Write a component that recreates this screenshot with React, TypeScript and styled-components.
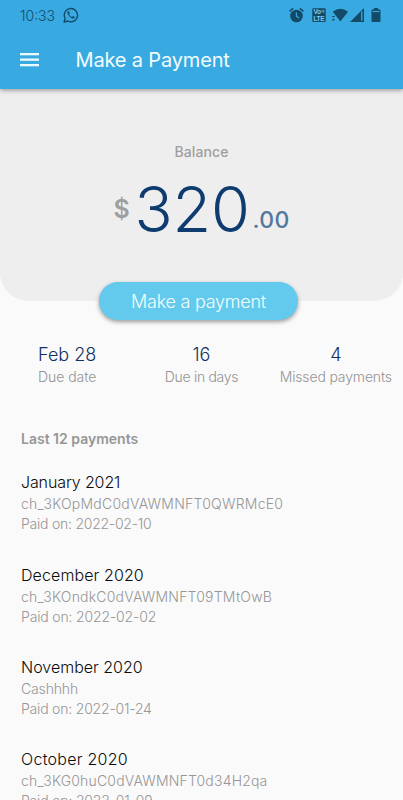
import React from 'react';
import styled, { createGlobalStyle } from 'styled-components';

const GlobalStyle = createGlobalStyle`
  * { box-sizing: border-box; }
  body {
    margin: 0;
    background: #fafafa;
    font-family: Inter, "Liberation Sans", sans-serif;
    font-weight: 300;
  }
`;

const Screen = styled.div`
  width: 100%;
  height: 800px;
  overflow: hidden;
  background: #fafafa;
`;

const Header = styled.header`
  position: relative;
  height: 89px;
  background: #39aae1;
  box-shadow: 0 1px 5px rgba(0, 0, 0, 0.42);
`;

const StatusBar = styled.div`
  display: flex;
  align-items: center;
  height: 31px;
  padding: 0 22px 0 20px;
  color: #124a68;
  font-size: 14px;
`;

const Clock = styled.span`
  width: 43px;
  line-height: 30px;
`;

const StatusIcons = styled.div`
  display: flex;
  align-items: center;
  margin-left: auto;
`;

const Glyph = styled.svg<{ $w: number; $gap?: number }>`
  display: block;
  flex: none;
  width: ${({ $w }) => $w}px;
  height: 16px;
  margin-top: -1px;
  margin-left: ${({ $gap = 0 }) => $gap}px;
`;

const AppBar = styled.div`
  display: flex;
  align-items: center;
  height: 58px;
  padding-left: 20px;
`;

const MenuButton = styled.button`
  display: flex;
  margin-right: 36.5px;
  padding: 0;
  border: 0;
  background: none;
`;

const Title = styled.h1`
  margin: 0;
  color: #f2fcff;
  font-size: 20px;
  font-weight: 400;
  line-height: 24px;
  letter-spacing: -0.16px;
`;

const BalancePanel = styled.section`
  display: flex;
  flex-direction: column;
  align-items: center;
  height: 212px;
  padding-top: 53px;
  border-radius: 0 0 28px 28px;
  background: #eee;
`;

const BalanceLabel = styled.div`
  color: #9e9e9e;
  font-size: 14px;
  font-weight: 500;
  line-height: 20px;
  letter-spacing: 0.08px;
`;

const Amount = styled.div`
  display: flex;
  align-items: flex-start;
  height: 72px;
  margin-top: 11px;
`;

const Currency = styled.span`
  width: 21px;
  color: #9e9e9e;
  font-size: 25px;
  font-weight: 560;
  line-height: 73px;
`;

const Whole = styled.span`
  color: #0e3c70;
  font-size: 63px;
  font-weight: 270;
  line-height: 73px;
  letter-spacing: -0.2px;
`;

const Cents = styled.span`
  margin-left: 3px;
  color: #53789f;
  font-size: 23px;
  font-weight: 450;
  line-height: 95px;
  letter-spacing: 0.3px;
`;

const PayButton = styled.button`
  display: block;
  position: relative;
  width: 199px;
  height: 38px;
  margin: -19px auto 0 99px;
  padding: 0;
  border: 0;
  border-radius: 19px;
  background: #64caed;
  box-shadow: 0 2px 4px rgba(0, 0, 0, 0.38);
  color: #f2fdff;
  font: 300 18px/39px Inter, sans-serif;
  letter-spacing: -0.25px;
`;

const Stats = styled.section`
  display: grid;
  grid-template-columns: repeat(3, 1fr);
  margin-top: 23px;
  text-align: center;
`;

const StatValue = styled.div`
  color: #12305f;
  font-size: 18px;
  line-height: 24px;
`;

const StatLabel = styled.div<{ $track: number }>`
  color: #939393;
  font-size: 14px;
  line-height: 20px;
  white-space: nowrap;
  letter-spacing: ${({ $track }) => $track}px;
`;

const History = styled.section`
  padding: 42.3px 21px 0;
`;

const HistoryTitle = styled.h2`
  margin: 0 0 21px;
  color: #969696;
  font-size: 14px;
  font-weight: 600;
  line-height: 20px;
`;

const Payment = styled.article`
  height: 92.4px;
`;

const Month = styled.div<{ $track: number }>`
  color: #0c0c0c;
  font-size: 16px;
  line-height: 24px;
  letter-spacing: ${({ $track }) => $track}px;
`;

const Detail = styled.div<{ $track: number }>`
  color: #969696;
  font-size: 14px;
  line-height: 20px;
  white-space: nowrap;
  letter-spacing: ${({ $track }) => $track}px;
`;

const stats = [
  { value: 'Feb 28', label: 'Due date', track: -0.05 },
  { value: '16', label: 'Due in days', track: -0.3 },
  { value: '4', label: 'Missed payments', track: -0.15 },
];

const payments = [
  { month: 'January 2021', monthTrack: -0.12, id: 'ch_3KOpMdC0dVAWMNFT0QWRMcE0', idTrack: 0.24, paid: '2022-02-10', paidTrack: -0.24 },
  { month: 'December 2020', monthTrack: 0.1, id: 'ch_3KOndkC0dVAWMNFT09TMtOwB', idTrack: 0.21, paid: '2022-02-02', paidTrack: -0.16 },
  { month: 'November 2020', monthTrack: 0, id: 'Cashhhh', idTrack: -0.15, paid: '2022-01-24', paidTrack: -0.2 },
  { month: 'October 2020', monthTrack: 0.27, id: 'ch_3KG0huC0dVAWMNFT0d34H2qa', idTrack: 0.18, paid: '2022-01-09', paidTrack: -0.18 },
];

const MenuIcon = () => (
  <svg width="19" height="14" viewBox="0 0 19 14" fill="#e9fbff">
    <rect y="0" width="19" height="2.3" />
    <rect y="5.5" width="19" height="2.3" />
    <rect y="11" width="19" height="2.3" />
  </svg>
);

const WhatsAppIcon = () => (
  <Glyph $w={16} viewBox="0 0 16 16" fill="none" stroke="currentColor" strokeWidth="1.4">
    <path d="M1.1 15 2.1 11.3A6.6 6.6 0 1 1 4.8 14Z" strokeLinejoin="round" />
    <path d="M5.3 4.3c-.8.5-1 1.4-.7 2.3.8 2.2 2.6 4.2 4.8 4.9 1 .3 1.9 0 2.3-.9l.1-.7-1.8-.9-1 1.1C7.5 9.4 6.5 8.3 6.1 7.2l.8-.9-.8-2Z" fill="currentColor" stroke="none" />
  </Glyph>
);

const AlarmIcon = () => (
  <Glyph $w={15} viewBox="0 0 15 16">
    <circle cx="7.5" cy="9" r="6.3" fill="currentColor" />
    <path d="M.5 4.4 4.2 1.3M14.5 4.4 10.8 1.3" stroke="currentColor" strokeWidth="1.5" />
    <path d="M7.4 5.5V9.3L10 11" fill="none" stroke="#39aae1" strokeWidth="1.2" />
  </Glyph>
);

const VolteText = styled.text`
  font: 700 6.5px "Liberation Sans", sans-serif;
  fill: #7ccbee;
`;

const VolteIcon = () => (
  <Glyph $w={14} $gap={8} viewBox="0 0 14 16">
    <rect x=".3" y="1.2" width="13.4" height="13.8" rx="1" fill="currentColor" />
    <VolteText x="1.5" y="7.4" textLength="7.6">Vo</VolteText>
    <path d="M9.6 3Q10.6 4 9.8 5.4M11.4 2.7Q12.6 4 11.6 5.8" fill="none" stroke="#7ccbee" strokeWidth=".8" />
    <VolteText x="1.5" y="13.6" textLength="11">LTE</VolteText>
  </Glyph>
);

const WifiIcon = () => (
  <Glyph $w={16} $gap={6} viewBox="0 0 16 16">
    <path d="M.8 4.8Q8.4-1.4 16 4.8L8.4 14.5Z" fill="currentColor" />
    <path d="M.3 9.6H2.5M.3 12.8H2.5" stroke="currentColor" strokeWidth="1.4" />
  </Glyph>
);

const SignalIcon = () => (
  <Glyph $w={14} $gap={2} viewBox="0 0 14 16">
    <path d="M0 15 14 1V15Z" fill="currentColor" />
    <path d="M11.8 4.5V13.8" stroke="#39aae1" strokeWidth="1.3" />
  </Glyph>
);

const BatteryIcon = () => (
  <Glyph $w={10} $gap={7} viewBox="0 0 10 16">
    <path d="M3 1H7V2.5H8.5Q9.5 2.5 9.5 3.5V14Q9.5 15 8.5 15H1.5Q.5 15 .5 14V3.5Q.5 2.5 1.5 2.5H3Z" fill="currentColor" />
    <path d="M1.6 4.5H8.4" stroke="#39aae1" strokeWidth="1.2" />
  </Glyph>
);

export default function App() {
  return (
    <Screen>
      <GlobalStyle />
      <Header>
        <StatusBar>
          <Clock>10:33</Clock>
          <WhatsAppIcon />
          <StatusIcons>
            <AlarmIcon />
            <VolteIcon />
            <WifiIcon />
            <SignalIcon />
            <BatteryIcon />
          </StatusIcons>
        </StatusBar>
        <AppBar>
          <MenuButton aria-label="Menu">
            <MenuIcon />
          </MenuButton>
          <Title>Make a Payment</Title>
        </AppBar>
      </Header>
      <BalancePanel>
        <BalanceLabel>Balance</BalanceLabel>
        <Amount>
          <Currency>$</Currency>
          <Whole>320</Whole>
          <Cents>.00</Cents>
        </Amount>
      </BalancePanel>
      <PayButton>Make a payment</PayButton>
      <Stats>
        {stats.map((s) => (
          <div key={s.label}>
            <StatValue>{s.value}</StatValue>
            <StatLabel $track={s.track}>{s.label}</StatLabel>
          </div>
        ))}
      </Stats>
      <History>
        <HistoryTitle>Last 12 payments</HistoryTitle>
        {payments.map((p) => (
          <Payment key={p.month}>
            <Month $track={p.monthTrack}>{p.month}</Month>
            <Detail $track={p.idTrack}>{p.id}</Detail>
            <Detail $track={p.paidTrack}>Paid on: {p.paid}</Detail>
          </Payment>
        ))}
      </History>
    </Screen>
  );
}
